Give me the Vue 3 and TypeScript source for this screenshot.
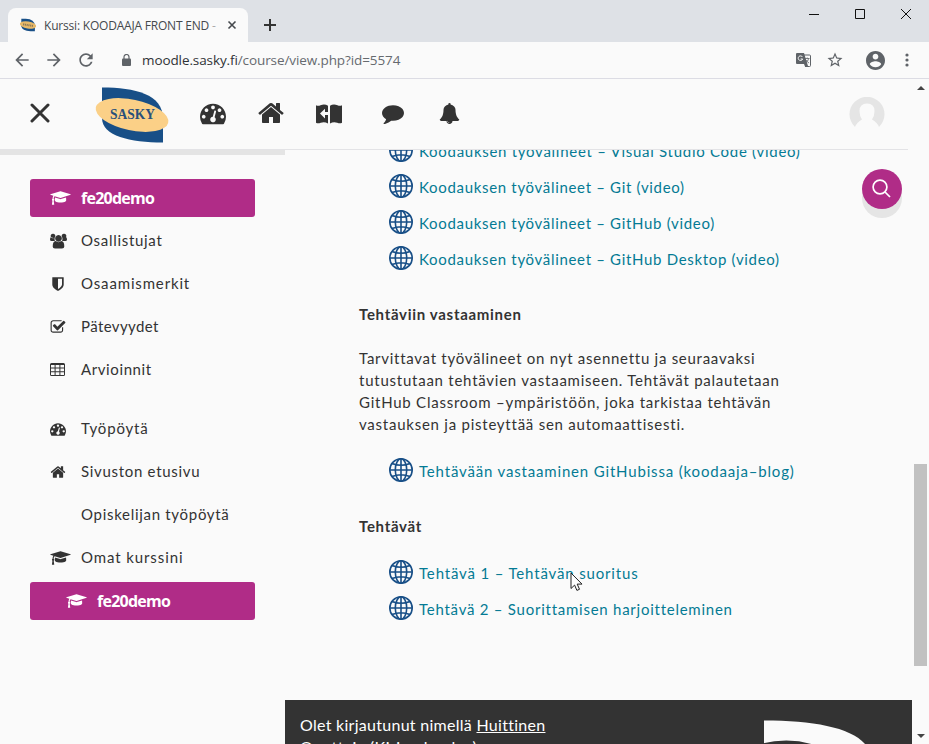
<script setup lang="ts">
interface NavItem { label: string; icon: string; active?: boolean; nested?: boolean; gap?: boolean; cls: string }

const icons: Record<string, { box: string; d: string }> = {
  cap: { box: '0 0 2304 1792', d: 'M1774 836l18 316q4 69-82 128t-235 93.500-323 34.500-323-34.500-235-93.500-82-128l18-316 574 181q22 7 48 7t48-7zm530-324q0 23-22 31l-1120 352q-4 1-10 1t-10-1l-652-206q-43 34-71 111.500t-34 178.500q63 36 63 109 0 69-58 107l58 433q2 14-8 25-9 11-24 11h-192q-15 0-24-11-10-11-8-25l58-433q-58-38-58-107 0-73 65-111 11-207 98-330l-333-104q-22-8-22-31t22-31l1120-352q4-1 10-1t10 1l1120 352q22 8 22 31z' },
  users: { box: '0 0 17 15', d: 'M3 .2a2.300 2.300 0 1 0 .01 0zM14 .2a2.300 2.300 0 1 0 .01 0zM8.500 1.600a3.300 3.300 0 1 0 .01 0zM4.600 5.200A4.200 4.200 0 0 0 5 7.500H1.600Q0 7.500 0 6q0-2.500 1.200-2.500Q3 4.800 4.600 4.300zM12.400 5.200A4.200 4.200 0 0 1 12 7.500h3.400Q17 7.500 17 6q0-2.500-1.200-2.500-1.800 1.300-3.400.8zM5.600 7.600q2.900 2.200 5.800 0Q14.300 8 14.300 13q0 2-2.300 2H5q-2.300 0-2.300-2 0-5 2.900-5.400z' },
  shield: { box: '0 0 1792 1792', d: 'M1344 960v-640h-448v1137q119-63 213-137 235-184 235-360zm192-768v768q0 86-33.500 170.500t-83 150-118 127.500-126.500 103-121 77.500-89.500 49.500-42.500 20q-12 6-26 6t-26-6q-16-7-42.500-20t-89.500-49.500-121-77.500-126.500-103-118-127.500-83-150-33.500-170.500v-768q0-26 19-45t45-19h1152q26 0 45 19t19 45z' },
  check: { box: '0 0 1792 1792', d: 'M1472 930v318q0 119-84.500 203.500t-203.500 84.500h-832q-119 0-203.500-84.500t-84.500-203.500v-832q0-119 84.500-203.500t203.500-84.500h832q63 0 117 25 15 7 18 23 3 17-9 29l-49 49q-10 10-23 10-3 0-9-2-23-6-45-6h-832q-66 0-113 47t-47 113v832q0 66 47 113t113 47h832q66 0 113-47t47-113v-254q0-13 9-22l64-64q10-10 23-10 6 0 12 3 20 8 20 29zm231-489l-814 814q-24 24-57 24t-57-24l-430-430q-24-24-24-57t24-57l110-110q24-24 57-24t57 24l263 263 647-647q24-24 57-24t57 24l110 110q24 24 24 57t-24 57z' },
  table: { box: '0 0 15 13', d: 'M1.500 0h12Q15 0 15 1.500v10q0 1.500-1.500 1.500h-12Q0 13 0 11.500v-10Q0 0 1.500 0zM1 2v2.600h3.600V2zM5.600 2v2.600h3.800V2zM10.400 2v2.600H14V2zM1 5.600v2.600h3.600V5.600zM5.600 5.600v2.600h3.800V5.600zM10.400 5.600v2.600H14V5.600zM1 9.200V12h3.600V9.200zM5.600 9.200V12h3.800V9.200zM10.400 9.200V12H14V9.200z' },
  gauge: { box: '0 0 1792 1792', d: 'M384 1152q0-53-37.500-90.500t-90.500-37.500-90.500 37.500-37.500 90.500 37.500 90.500 90.500 37.500 90.500-37.500 37.500-90.500zm192-448q0-53-37.500-90.500t-90.500-37.500-90.500 37.500-37.500 90.500 37.500 90.500 90.500 37.500 90.500-37.500 37.500-90.500zm428 481l101-382q6-26-7.500-48.500t-38.500-29.500-48 6.500-30 39.500l-101 382q-60 5-107 43.500t-63 98.500q-20 77 20 146t117 89 146-20 89-117q16-60-6-117t-72-91zm660-33q0-53-37.500-90.500t-90.500-37.500-90.500 37.500-37.500 90.500 37.500 90.500 90.500 37.500 90.500-37.500 37.500-90.500zm-640-640q0-53-37.500-90.500t-90.500-37.500-90.500 37.500-37.500 90.500 37.500 90.500 90.500 37.500 90.500-37.500 37.500-90.500zm448 192q0-53-37.500-90.500t-90.500-37.500-90.500 37.500-37.500 90.500 37.500 90.500 90.500 37.500 90.500-37.500 37.500-90.500zm320 448q0 261-141 483-19 29-54 29h-1402q-35 0-54-29-141-221-141-483 0-182 71-348t191-286 286-191 348-71 348 71 286 191 191 286 71 348z' },
  home: { box: '0 0 1792 1792', d: 'M1472 992v480q0 26-19 45t-45 19h-384v-384h-256v384h-384q-26 0-45-19t-19-45v-480q0-1 .5-3t.5-3l575-474 575 474q1 2 1 6zm223-69l-62 74q-8 9-21 11h-3q-13 0-21-7l-692-577-692 577q-12 8-24 7-13-2-21-11l-62-74q-8-10-7-23.500t11-21.500l719-599q32-26 76-26t76 26l244 204v-195q0-14 9-23t23-9h192q14 0 23 9t9 23v408l219 182q10 8 11 21.500t-7 23.500z' },
  comment: { box: '0 0 1792 1792', d: 'M1792 896q0 174-120 321.500t-326 233-450 85.500q-70 0-145-8-198 175-460 242-49 14-114 22-17 2-30.500-9t-17.500-29v-1q-3-4-.5-12t2-10 4.500-9.500l6-9 7-8.500 8-9q7-8 31-34.500t34.500-38 31-39.500 32.500-51 27-59 26-76q-157-89-247.500-220t-90.500-281q0-130 71-248.500t191-204.500 286-136.500 348-50.500q244 0 450 85.500t326 233 120 321.500z' },
  bell: { box: '0 0 1792 1792', d: 'M912 1696q0-16-16-16-59 0-101.500-42.500t-42.500-101.500q0-16-16-16t-16 16q0 73 51.500 124.500t124.500 51.500q16 0 16-16zm816-288q0 52-38 90t-90 38h-448q0 106-75 181t-181 75-181-75-75-181h-448q-52 0-90-38t-38-90q50-42 91-88t85-119.500 74.500-158.500 50-206 19.500-260q0-152 117-282.500t307-158.500q-8-19-8-39 0-40 28-68t68-28 68 28 28 68q0 20-8 39 190 28 307 158.500t117 282.500q0 139 19.500 260t50 206 74.500 158.500 85 119.500 91 88z' },
  book: { box: '0 0 26 20', d: 'M0 1.300Q2 2.400 4.500 1.300 8.500-.4 12 1.700V19.500Q8.500 17.300 4.800 18.700 2 19.900 0 18.800zM4 9.500l5 5v-3.600h3V8H9V4.700zM14 1.700Q17.500-.4 21.500 1.300 24 2.400 26 1.300V18.800Q24 19.900 21.200 18.700 17.500 17.300 14 19.500z' },
}

const nav: NavItem[] = [
  { label: 'fe20demo', icon: 'cap', active: true, cls: 'n0' },
  { label: 'Osallistujat', icon: 'users', cls: 'n1' },
  { label: 'Osaamismerkit', icon: 'shield', cls: 'n2' },
  { label: 'Pätevyydet', icon: 'check', cls: 'n3' },
  { label: 'Arvioinnit', icon: 'table', cls: 'n4' },
  { label: 'Työpöytä', icon: 'gauge', gap: true, cls: 'n5' },
  { label: 'Sivuston etusivu', icon: 'home', cls: 'n6' },
  { label: 'Opiskelijan työpöytä', icon: '', cls: 'n7' },
  { label: 'Omat kurssini', icon: 'cap', cls: 'n8' },
  { label: 'fe20demo', icon: 'cap', active: true, nested: true, cls: 'n9' },
]

const sections = [
  {
    id: 'tools', title: '', lines: [] as string[],
    links: [
      'Koodauksen työvälineet – Visual Studio Code (video)',
      'Koodauksen työvälineet – Git (video)',
      'Koodauksen työvälineet – GitHub (video)',
      'Koodauksen työvälineet – GitHub Desktop (video)',
    ],
  },
  {
    id: 'answer', title: 'Tehtäviin vastaaminen',
    lines: [
      'Tarvittavat työvälineet on nyt asennettu ja seuraavaksi',
      'tutustutaan tehtävien vastaamiseen. Tehtävät palautetaan',
      'GitHub Classroom –ympäristöön, joka tarkistaa tehtävän',
      'vastauksen ja pisteyttää sen automaattisesti.',
    ],
    links: ['Tehtävään vastaaminen GitHubissa (koodaaja–blog)'],
  },
  {
    id: 'tasks', title: 'Tehtävät', lines: [] as string[],
    links: ['Tehtävä 1 – Tehtävän suoritus', 'Tehtävä 2 – Suorittamisen harjoitteleminen'],
  },
]
</script>

<template>
  <div class="window">
    <div class="tabs">
      <div class="tab">
        <svg class="favicon" viewBox="0 0 72 56"><path d="M6 0h20q40 2 41 32v24H48Q8 54 6 34z" fill="#184f87" /><ellipse cx="36" cy="28" rx="37" ry="16" transform="rotate(10 36 28)" fill="#e7b867" /><path d="M14 25l44 7" stroke="#8a7757" stroke-width="9" stroke-dasharray="5 3" /></svg>
        <span class="tab-title">Kurssi: KOODAAJA FRONT END <i>-</i></span>
        <svg class="tab-close" viewBox="0 0 8 8"><path d="M.5.5l7 7M7.500.5l-7 7" /></svg>
      </div>
      <svg class="plus" viewBox="0 0 12 12"><path d="M6 0v12M0 6h12" /></svg>
      <div class="controls">
        <svg viewBox="0 0 10 10"><path d="M0 5.500h10" /></svg>
        <svg viewBox="0 0 10 10"><path d="M.5.5h9v9h-9z" /></svg>
        <svg viewBox="0 0 10 10"><path d="M0 0l10 10M10 0L0 10" /></svg>
      </div>
    </div>
    <div class="toolbar">
      <svg class="tool" viewBox="0 0 24 24"><path d="M20 11H7.830l5.590-5.590L12 4l-8 8 8 8 1.410-1.410L7.830 13H20v-2z" /></svg>
      <svg class="tool" viewBox="0 0 24 24"><path d="M12 4l-1.410 1.410L16.170 11H4v2h12.170l-5.580 5.590L12 20l8-8z" /></svg>
      <svg class="tool" viewBox="0 0 24 24"><path d="M17.650 6.350C16.200 4.900 14.210 4 12 4c-4.420 0-7.990 3.580-7.990 8s3.570 8 7.990 8c3.730 0 6.840-2.550 7.730-6h-2.080c-.82 2.330-3.040 4-5.650 4-3.310 0-6-2.690-6-6s2.690-6 6-6c1.660 0 3.140.69 4.220 1.780L13 11h7V4l-2.350 2.350z" /></svg>
      <svg class="lock" viewBox="0 0 9 12"><path d="M1 4.500h7q1 0 1 1V11q0 1-1 1H1q-1 0-1-1V5.500q0-1 1-1z" /><path d="M2 5V3a2.500 2.500 0 0 1 5 0v2" fill="none" stroke="#5f6368" stroke-width="1.200" /></svg>
      <span class="url">moodle.sasky.fi<em>/course/view.php?id=5574</em></span>
      <div class="actions">
        <svg class="translate" viewBox="0 0 15 14"><path d="M1 0h7l4 13-3 .5L8 11H1q-1 0-1-1V1q0-1 1-1z" /><path d="M8 2h5.500q1 0 1 1v9.500q0 1-1 1H9" fill="none" stroke="#5f6368" /><path d="M6.500 4A2.300 2.300 0 1 0 6.700 6H4.600" fill="none" stroke="#fafafa" /><path d="M9 5.500h4.500M11.200 4.500v1M12.700 5.500q-.7 3-3 4M10 7q1 2 3 3" fill="none" stroke="#5f6368" stroke-width=".8" /></svg>
        <svg class="star" viewBox="0 0 24 24"><path d="M22 9.240l-7.190-.62L12 2 9.190 8.630 2 9.240l5.460 4.730L5.820 21 12 17.270 18.180 21l-1.630-7.030L22 9.240zM12 15.400l-3.760 2.270 1-4.280-3.320-2.880 4.380-.38L12 6.100l1.710 4.040 4.380.38-3.320 2.880 1 4.280L12 15.400z" /></svg>
        <svg class="account" viewBox="2 2 20 20"><path d="M12 2C6.480 2 2 6.480 2 12s4.480 10 10 10 10-4.480 10-10S17.520 2 12 2zm0 3c1.660 0 3 1.340 3 3s-1.340 3-3 3-3-1.340-3-3 1.340-3 3-3zm0 14.200c-2.500 0-4.710-1.280-6-3.220.03-1.990 4-3.080 6-3.080 1.990 0 5.970 1.090 6 3.080-1.290 1.940-3.500 3.220-6 3.220z" /></svg>
        <svg class="dots" viewBox="0 0 4 14"><circle cx="2" cy="2" r="1.600" /><circle cx="2" cy="7" r="1.600" /><circle cx="2" cy="12" r="1.600" /></svg>
      </div>
    </div>

    <div class="viewport">
      <div class="page">
        <header class="header">
          <svg class="menu-close" viewBox="0 0 20 20"><path d="M2 2l16 16M18 2L2 18" /></svg>
          <svg class="logo" viewBox="0 0 72 56">
            <path d="M6 .5C39 .5 67 7 67 32V55.500C34 55.500 6 49 6 31z" fill="#184f87" />
            <ellipse cx="36" cy="28" rx="37" ry="15.400" transform="rotate(12 36 28)" fill="#fbd087" />
            <text x="14" y="32" textLength="45" lengthAdjust="spacingAndGlyphs">SASKY</text>
          </svg>
          <svg class="h-gauge" :viewBox="icons.gauge.box"><path :d="icons.gauge.d" /></svg>
          <svg class="h-home" :viewBox="icons.home.box"><path :d="icons.home.d" /></svg>
          <svg class="h-book" :viewBox="icons.book.box"><path :d="icons.book.d" fill-rule="evenodd" /></svg>
          <svg class="h-comment" :viewBox="icons.comment.box"><path :d="icons.comment.d" /></svg>
          <svg class="h-bell" :viewBox="icons.bell.box"><path :d="icons.bell.d" /></svg>
          <svg class="avatar" viewBox="0 0 36 36"><path d="M6 30A17.500 17.500 0 1 1 30 30Q28 25 23 22.500 25.500 19 25.500 14 25.500 6.500 18 6.500T10.500 14Q10.500 19 13 22.500 8 25 6 30z" /></svg>
        </header>
        <div class="body">
          <aside class="sidebar">
            <nav class="nav">
              <a v-for="(item, i) in nav" :key="i" class="item" :class="[item.cls, { active: item.active, nested: item.nested, gap: item.gap }]">
                <span class="slot"><svg v-if="item.icon" :class="'i-' + item.icon" :viewBox="icons[item.icon].box"><path :d="icons[item.icon].d" :fill-rule="item.icon === 'table' ? 'evenodd' : 'nonzero'" /></svg></span>
                <span class="label">{{ item.label }}</span>
              </a>
            </nav>
          </aside>
          <div class="main">
            <main class="course">
              <section v-for="s in sections" :key="s.id" :class="s.id">
                <h3 v-if="s.title">{{ s.title }}</h3>
                <p v-if="s.lines.length"><span v-for="(l, i) in s.lines" :key="i" :class="'p' + i">{{ l }}</span></p>
                <ul>
                  <li v-for="(l, i) in s.links" :key="l">
                    <svg class="globe" viewBox="0 0 24 24"><circle cx="12" cy="12" r="11.200" /><ellipse cx="12" cy="12" rx="5.700" ry="11.200" /><path d="M12 .8v22.400M.8 12h22.400M3 5.500q9 3.600 18 0M3 18.500q9-3.600 18 0" /></svg>
                    <a :class="'l' + i">{{ l }}</a>
                  </li>
                </ul>
              </section>
            </main>
            <footer class="footer">
              <div class="login"><span class="f0">Olet kirjautunut nimellä <u>Huittinen</u></span><span class="f1">Opettaja (Kirjaudu ulos)</span></div>
              <svg class="foot-logo" viewBox="0 0 110 30"><path d="M4 .5C52 .5 90 7 105 24L108 30H4z" fill="#fafafa" /><path d="M0 24Q28 17 53 24.500L64 30H0z" fill="#333" /></svg>
            </footer>
          </div>
        </div>
        <button class="search" aria-label="Haku"><svg viewBox="0 0 20 20"><circle cx="8" cy="8" r="6.900" /><path d="M13 13l5 5" /></svg></button>
      </div>
      <div class="scrollbar">
        <svg viewBox="0 0 8 4"><path d="M4 0l4 4H0z" /></svg>
        <div class="thumb"></div>
        <svg viewBox="0 0 8 4"><path d="M0 0h8L4 4z" /></svg>
      </div>
    </div>
    <svg class="cursor" viewBox="0 0 13 20"><path d="M1 1v15.500l3.600-3.400 2.300 5.300 2.600-1.100-2.300-5.200H12z" fill="#fff" stroke="#222" /></svg>
  </div>
</template>

<style>
body { margin: 0; overflow: hidden; }
</style>

<style scoped>
* { box-sizing: border-box; }
svg { display: block; flex: none; }
.window { position: relative; width: 929px; height: 744px; display: flex; flex-direction: column; overflow: hidden; background: #fafafa; color: #333; font-family: "Lato", "Noto Sans", sans-serif; font-size: 15px; }
.tabs { height: 42px; background: #dee1e6; display: flex; padding: 8px 14px 0 8px; }
.tab { width: 240px; height: 34px; background: #fafafa; border-radius: 8px 8px 0 0; display: flex; align-items: center; padding-left: 12px; }
.favicon { width: 16px; height: 14px; }
.tab-title { width: 175px; margin-left: 8px; font: 12px "Open Sans", sans-serif; letter-spacing: -.2px; color: #45494d; white-space: nowrap; }
.tab-title i { color: #aaa; font-style: normal; }
.tab-close { width: 8px; height: 8px; margin-left: 9px; fill: none; stroke: #45494d; stroke-width: 1.600; overflow: visible; }
.plus { width: 12px; height: 12px; margin: 11px 0 0 16px; fill: none; stroke: #333; stroke-width: 2; }
.controls { margin-left: auto; display: flex; gap: 36px; padding: 1px 4px 0 0; }
.controls svg { width: 10px; height: 10px; fill: none; stroke: #111; stroke-width: 1; overflow: visible; }
.toolbar { height: 37px; border-bottom: 1px solid #dcdce4; display: flex; align-items: center; padding: 0 20px 0 12px; gap: 12px; fill: #5f6368; }
.tool { width: 20px; height: 20px; }
.lock { width: 9px; height: 12px; margin-left: 14px; }
.url { margin-left: -1px; font: 13.500px "Open Sans", sans-serif; letter-spacing: -.1px; color: #303236; }
.url em { font-style: normal; color: #666a6f; }
.actions { margin-left: auto; display: flex; align-items: center; }
.translate { width: 15px; height: 14px; }
.star { width: 18px; height: 18px; margin-left: 15px; }
.account { width: 19px; height: 19px; margin-left: 22px; }
.dots { width: 4px; height: 14px; margin-left: 20px; }
.viewport { flex: 1; display: flex; min-height: 0; }
.page { position: relative; width: 912px; display: flex; flex-direction: column; }
.header { width: 908px; height: 71px; border-bottom: 1px solid #e3e3e6; display: flex; align-items: center; padding-left: 30px; fill: #333; }
.header > svg { margin-top: -2px; }
.menu-close { width: 20px; height: 20px; fill: none; stroke: #333; stroke-width: 3; stroke-linecap: round; }
.header > .logo { width: 72px; height: 56px; margin: 1px 0 0 46px; overflow: visible; }
.logo text { font: bold 14px "Liberation Serif", serif; fill: #28507b; }
.h-gauge { width: 26px; height: 26px; margin-left: 32px; }
.h-home { width: 28px; height: 28px; margin-left: 31px; }
.header > .h-book { width: 26px; height: 20px; margin: 0 0 0 31px; }
.h-comment { width: 22px; height: 22px; margin-left: 40px; }
.h-bell { width: 21px; height: 21px; margin-left: 35px; }
.header > .avatar { width: 36px; height: 36px; margin: 2px 23px 0 auto; fill: #e5e5e5; }
.body { flex: 1; min-height: 0; display: flex; overflow: hidden; }
.sidebar { width: 285px; border-top: 5px solid #e4e4e4; padding: 24px 30px 0; }
.nav { display: flex; flex-direction: column; gap: 5px; }
.item { height: 38px; display: flex; align-items: center; padding-left: 20px; border-radius: 3px; letter-spacing: .7px; white-space: nowrap; }
.slot { width: 31px; fill: #333; }
.label { margin-top: -2px; }
.item svg { width: 16px; height: 16px; margin-top: -1px; }
.item .i-cap { width: 21px; height: 16px; }
.item .i-users { width: 17px; height: 16px; }
.item .i-table { width: 15px; height: 13px; }
.n2 { letter-spacing: .85px; }
.n3 { letter-spacing: .4px; }
.n4 { letter-spacing: .6px; }
.n5 { letter-spacing: .85px; }
.n8 { letter-spacing: .9px; }
.gap { margin-top: 16px; }
.active { background: #b02c87; color: #fff; font-weight: 700; }
.active .slot { fill: #fff; }
.active .label { font: bold 16px "Open Sans", sans-serif; letter-spacing: -.75px; margin-top: 0; }
.nested { margin-top: -6px; padding-left: 36px; }
.n8 { margin-bottom: 6px; }
.main { width: 627px; display: flex; flex-direction: column; }
.course { margin-top: -18px; height: 568px; padding-left: 74px; flex: none; }
h3, p, ul { margin: 0; padding: 0; }
h3 { position: relative; top: -1px; margin-top: 28px; font: 700 15px/22px "Lato", sans-serif; letter-spacing: .7px; font-size: 15px; }
p { position: relative; top: -1px; margin-top: 22px; line-height: 22px; letter-spacing: .76px; }
.p0 { letter-spacing: .73px; }
p span { display: block; white-space: nowrap; }
ul { list-style: none; padding-left: 30px; }
.answer ul, .tasks ul { margin-top: 16px; }
li { height: 36px; display: flex; align-items: center; color: #047a94; letter-spacing: .68px; white-space: nowrap; }
li a { margin: 2px 0 0 6px; }
.tools .l0 { letter-spacing: .72px; }
.answer .l0 { letter-spacing: .83px; }
.tasks .l0 { letter-spacing: .84px; }
.tasks .l1 { letter-spacing: .75px; }
.globe { width: 24px; height: 24px; fill: none; stroke: #184f87; stroke-width: 1.600; }
.footer { flex: none; height: 44px; background: #333; color: #fff; display: flex; justify-content: space-between; padding: 14px 42px 0 15px; overflow: hidden; }
.login { font-size: 16px; line-height: 22px; letter-spacing: .28px; }
.f1 { letter-spacing: .5px; }
.login span { display: block; white-space: nowrap; }
.foot-logo { width: 110px; height: 30px; margin-top: 6px; }
.search { position: absolute; left: 862px; top: 90px; width: 40px; height: 40px; border: 0; padding: 0; border-radius: 50%; background: #b02c87; box-shadow: 0 9px 0 #e5e5e5; display: flex; align-items: center; justify-content: center; }
.search svg { width: 20px; height: 20px; fill: none; stroke: #fff; stroke-width: 1.700; }
.scrollbar { width: 17px; display: flex; flex-direction: column; align-items: center; padding: 7px 0 6px; fill: #444; }
.scrollbar svg { width: 8px; height: 4px; }
.thumb { width: 13px; height: 202px; background: #c1c1c1; margin: 374px 0 auto; }
.cursor { position: absolute; left: 570px; top: 572px; width: 13px; height: 20px; }
</style>
